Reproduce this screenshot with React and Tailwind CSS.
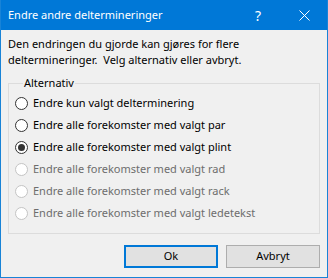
import React from "react";

const options = [
  { label: "Endre kun valgt delterminering", checked: false, disabled: false },
  { label: "Endre alle forekomster med valgt par", checked: false, disabled: false },
  { label: "Endre alle forekomster med valgt plint", checked: true, disabled: false },
  { label: "Endre alle forekomster med valgt rad", checked: false, disabled: true },
  { label: "Endre alle forekomster med valgt rack", checked: false, disabled: true },
  { label: "Endre alle forekomster med valgt ledetekst", checked: false, disabled: true },
];

function Radio({ checked, disabled }) {
  return (
    <span
      className={
        "flex h-[13px] w-[13px] shrink-0 items-center justify-center rounded-full border bg-white " +
        (disabled ? "border-[#c4c4c4] bg-[#f0f0f0]" : "border-[#333333]")
      }
    >
      {checked && <span className="h-[7px] w-[7px] rounded-full bg-[#333333]" />}
    </span>
  );
}

export default function App() {
  return (
    <div
      className="flex h-[278px] w-[328px] flex-col border-x border-b border-[#1883d7] bg-[#f0f0f0] text-[11px] text-black"
      style={{ fontFamily: '"Noto Sans", "Open Sans", sans-serif' }}
    >
      <div className="flex h-[30px] shrink-0 items-center bg-[#0078d7] pl-[7px] text-white">
        <span className="flex-1 text-[11px]">Endre andre deltermineringer</span>
        <span className="w-[46px] text-center text-[14px]">?</span>
        <span className="flex w-[46px] items-center justify-center">
          <svg width="11" height="11" viewBox="0 0 11 11">
            <path d="M0.5 0.5 L10.5 10.5 M10.5 0.5 L0.5 10.5" stroke="white" strokeWidth="1" />
          </svg>
        </span>
      </div>

      <div className="flex flex-1 flex-col px-[7px]">
        <p className="mt-[6px] leading-[16px]">
          Den endringen du gjorde kan gjøres for flere
          <br />
          deltermineringer.&nbsp; Velg alternativ eller avbryt.
        </p>

        <fieldset className="mt-[8px] border border-[#dcdcdc] px-[6px] pb-[9px] pt-[2px]">
          <legend className="ml-[8px] px-[1px] leading-[14px]">Alternativ</legend>
          {options.map((o) => (
            <div key={o.label} className="flex h-[22px] items-center gap-[5px]">
              <Radio checked={o.checked} disabled={o.disabled} />
              <span className={o.disabled ? "text-[#6d6d6d]" : ""}>{o.label}</span>
            </div>
          ))}
        </fieldset>

        <div className="mt-[11px] flex justify-end gap-[8px]">
          <button className="h-[23px] w-[94px] border-2 border-[#0078d7] bg-[#e1e1e1]">Ok</button>
          <button className="h-[23px] w-[94px] border border-[#adadad] bg-[#e1e1e1]">Avbryt</button>
        </div>
      </div>
    </div>
  );
}
